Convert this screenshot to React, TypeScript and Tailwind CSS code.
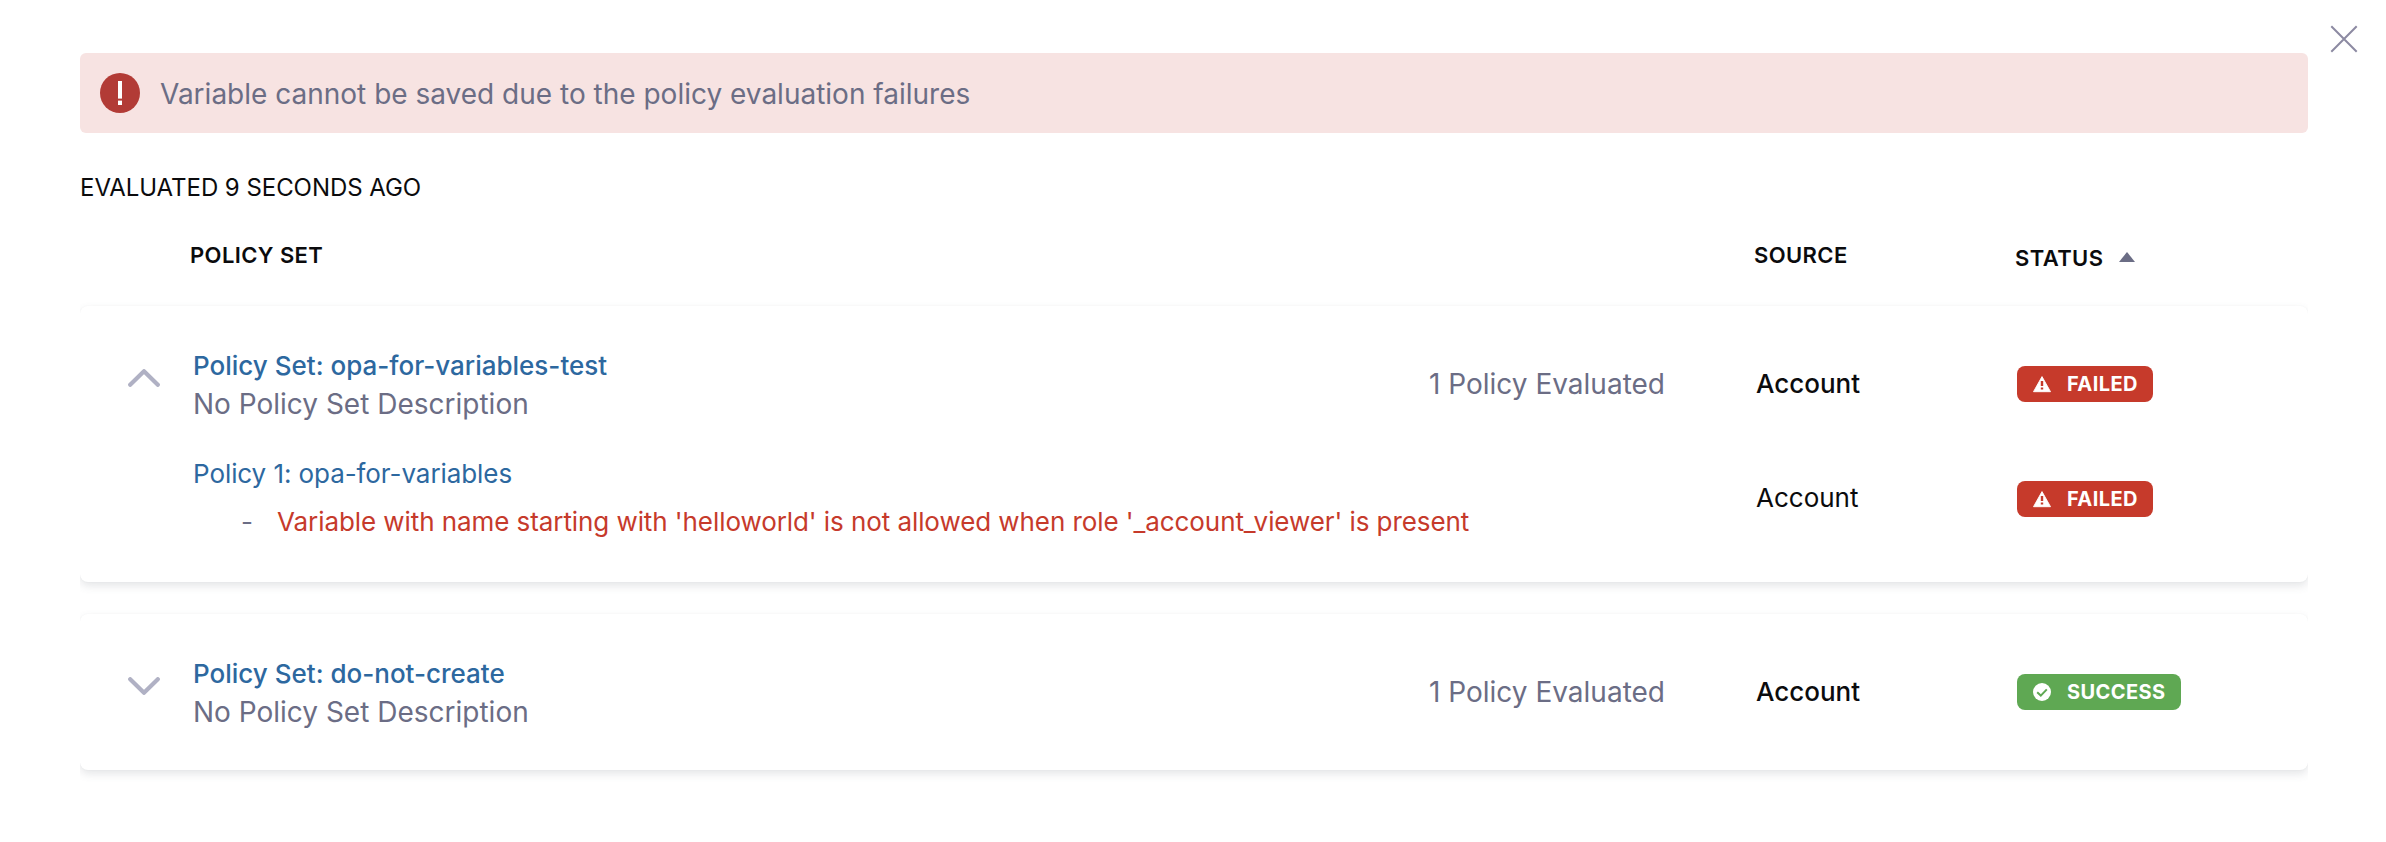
import type { ReactNode } from "react";

type Status = "failed" | "success";

function CloseIcon() {
  return (
    <svg className="block h-[28px] w-[28px]" viewBox="0 0 28 28" fill="none" stroke="#8c8aa2" strokeWidth="2">
      <path d="M1.3 1.3 26.7 26.7M26.7 1.3 1.3 26.7" />
    </svg>
  );
}

function ErrorIcon() {
  return (
    <svg className="block h-[40px] w-[40px] shrink-0" viewBox="0 0 40 40">
      <circle cx="20" cy="20" r="20" fill="#b23b36" />
      <rect x="18" y="8" width="4" height="17.6" fill="#fff" />
      <rect x="18" y="27.6" width="4" height="4.4" fill="#fff" />
    </svg>
  );
}

function Chevron({ open }: { open: boolean }) {
  return (
    <svg
      className="block h-[18px] w-[32px]"
      viewBox="0 0 32 18"
      fill="none"
      stroke="#b0b1c4"
      strokeWidth="4.2"
      strokeLinecap="round"
      strokeLinejoin="round"
    >
      {open ? <path d="M2.2 15.8 16 2.2 29.8 15.8" /> : <path d="M2.2 2.2 16 15.8 29.8 2.2" />}
    </svg>
  );
}

function StatusBadge({ status }: { status: Status }) {
  const failed = status === "failed";
  return (
    <span
      className={`flex h-[36px] items-center rounded-[8px] px-[16px] text-white ${
        failed ? "w-[136px] bg-[#c63a2b]" : "w-[164px] bg-[#5fa853]"
      }`}
    >
      <svg className="block h-[18px] w-[18px] shrink-0" viewBox="0 0 18 18">
        {failed ? (
          <>
            <path d="M9 1.6 17.5 16.7H.5Z" fill="#fff" stroke="#fff" strokeWidth="0.9" strokeLinejoin="round" />
            <path d="M7.8 6h2.4v5H7.8zM7.8 12.4h2.4v2.2H7.8z" fill="#c63a2b" />
          </>
        ) : (
          <>
            <circle cx="9" cy="9" r="9" fill="#fff" />
            <path d="M4.2 9.2 7.8 12.6 13.8 6.4" fill="none" stroke="#5fa853" strokeWidth="2" />
          </>
        )}
      </svg>
      <span className="ml-[16px] text-[20px] leading-[36px] font-bold tracking-[0.4px]">
        {failed ? "FAILED" : "SUCCESS"}
      </span>
    </span>
  );
}

function Row({
  lead,
  main,
  count,
  source,
  badge,
}: {
  lead?: ReactNode;
  main: ReactNode;
  count?: string;
  source: ReactNode;
  badge: ReactNode;
}) {
  return (
    <div className="grid grid-cols-[113px_1fr_91px_261px_291px] items-center">
      <div className="flex pl-[48px]">{lead}</div>
      <div className="flex items-center justify-between whitespace-nowrap">
        {main}
        {count && <span className="text-[28px] leading-[38px] text-[#6b6d85]">{count}</span>}
      </div>
      <div />
      <div className="pb-px text-[26px] leading-[35px] text-[#0b0b0d]">{source}</div>
      {badge}
    </div>
  );
}

function PolicySetRow({ name, open, status }: { name: string; open: boolean; status: Status }) {
  return (
    <div className="flex h-[156px] flex-col justify-center">
      <Row
        lead={
          <div className="pb-[12px]">
            <Chevron open={open} />
          </div>
        }
        main={
          <div>
            <div className="text-[26px] leading-[39px] font-medium text-[#2d689f]">Policy Set: {name}</div>
            <div className="mt-px text-[28px] leading-[36px] text-[#6b6d85]">No Policy Set Description</div>
          </div>
        }
        count="1 Policy Evaluated"
        source={<div className="font-medium">Account</div>}
        badge={<StatusBadge status={status} />}
      />
    </div>
  );
}

function Card({ children }: { children: ReactNode }) {
  return (
    <div className="rounded-[8px] bg-white shadow-[0_0_2px_rgba(40,41,61,0.04),0_4px_8px_rgba(96,97,112,0.16)]">
      {children}
    </div>
  );
}

export default function App() {
  return (
    <div className="flex h-[842px] w-[2386px] bg-white font-['Inter',sans-serif]">
      <main className="ml-[80px] w-[2228px] shrink-0 pt-[53px]">
        <div className="flex h-[80px] items-center rounded-[6px] bg-[#f7e3e2] pl-[20px]">
          <ErrorIcon />
          <span className="ml-[20px] pt-[2px] text-[28px] leading-[40px] text-[#6b6d85]">
            Variable cannot be saved due to the policy evaluation failures
          </span>
        </div>

        <div className="mt-[37px] text-[24px] leading-[35px] tracking-[-0.05px] text-[#0b0b0d]">
          EVALUATED 9 SECONDS AGO
        </div>

        <div className="overflow-hidden pb-[24px]">
          <div className="grid h-[101px] grid-cols-[110px_1fr_261px_293px] pt-[34px] text-[22px] leading-[32px] font-semibold tracking-[0.4px] text-[#0b0b0d]">
            <div />
            <div>POLICY SET</div>
            <div>SOURCE</div>
            <div className="flex items-start gap-[16px] pt-[3px]">
              STATUS
              <svg className="mt-[10px] block h-[10px] w-[16px]" viewBox="0 0 16 10" fill="#6b6d85">
                <path d="M8 0 16 10H0Z" />
              </svg>
            </div>
          </div>

          <div className="flex flex-col gap-[32px]">
            <Card>
              <PolicySetRow name="opa-for-variables-test" open status="failed" />
              <div className="flex h-[120px] flex-col">
                <div className="-mt-[12px]">
                  <Row
                    main={
                      <div className="flex flex-col gap-px pb-px text-[26px] leading-[47px] tracking-[-0.075px]">
                        <div className="text-[#2d689f]">Policy 1: opa-for-variables</div>
                        <div className="flex text-[#c63a2b]">
                          <span className="w-[84px] pl-[48px] text-[#6b6d85]">-</span>
                          Variable with name starting with 'helloworld' is not allowed when role '_account_viewer' is
                          present
                        </div>
                      </div>
                    }
                    source="Account"
                    badge={
                      <div className="pt-[2px]">
                        <StatusBadge status="failed" />
                      </div>
                    }
                  />
                </div>
              </div>
            </Card>
            <Card>
              <PolicySetRow name="do-not-create" open={false} status="success" />
            </Card>
          </div>
        </div>
      </main>
      <button aria-label="Close" className="mt-[25px] ml-[22px] h-[28px] w-[28px]">
        <CloseIcon />
      </button>
    </div>
  );
}
